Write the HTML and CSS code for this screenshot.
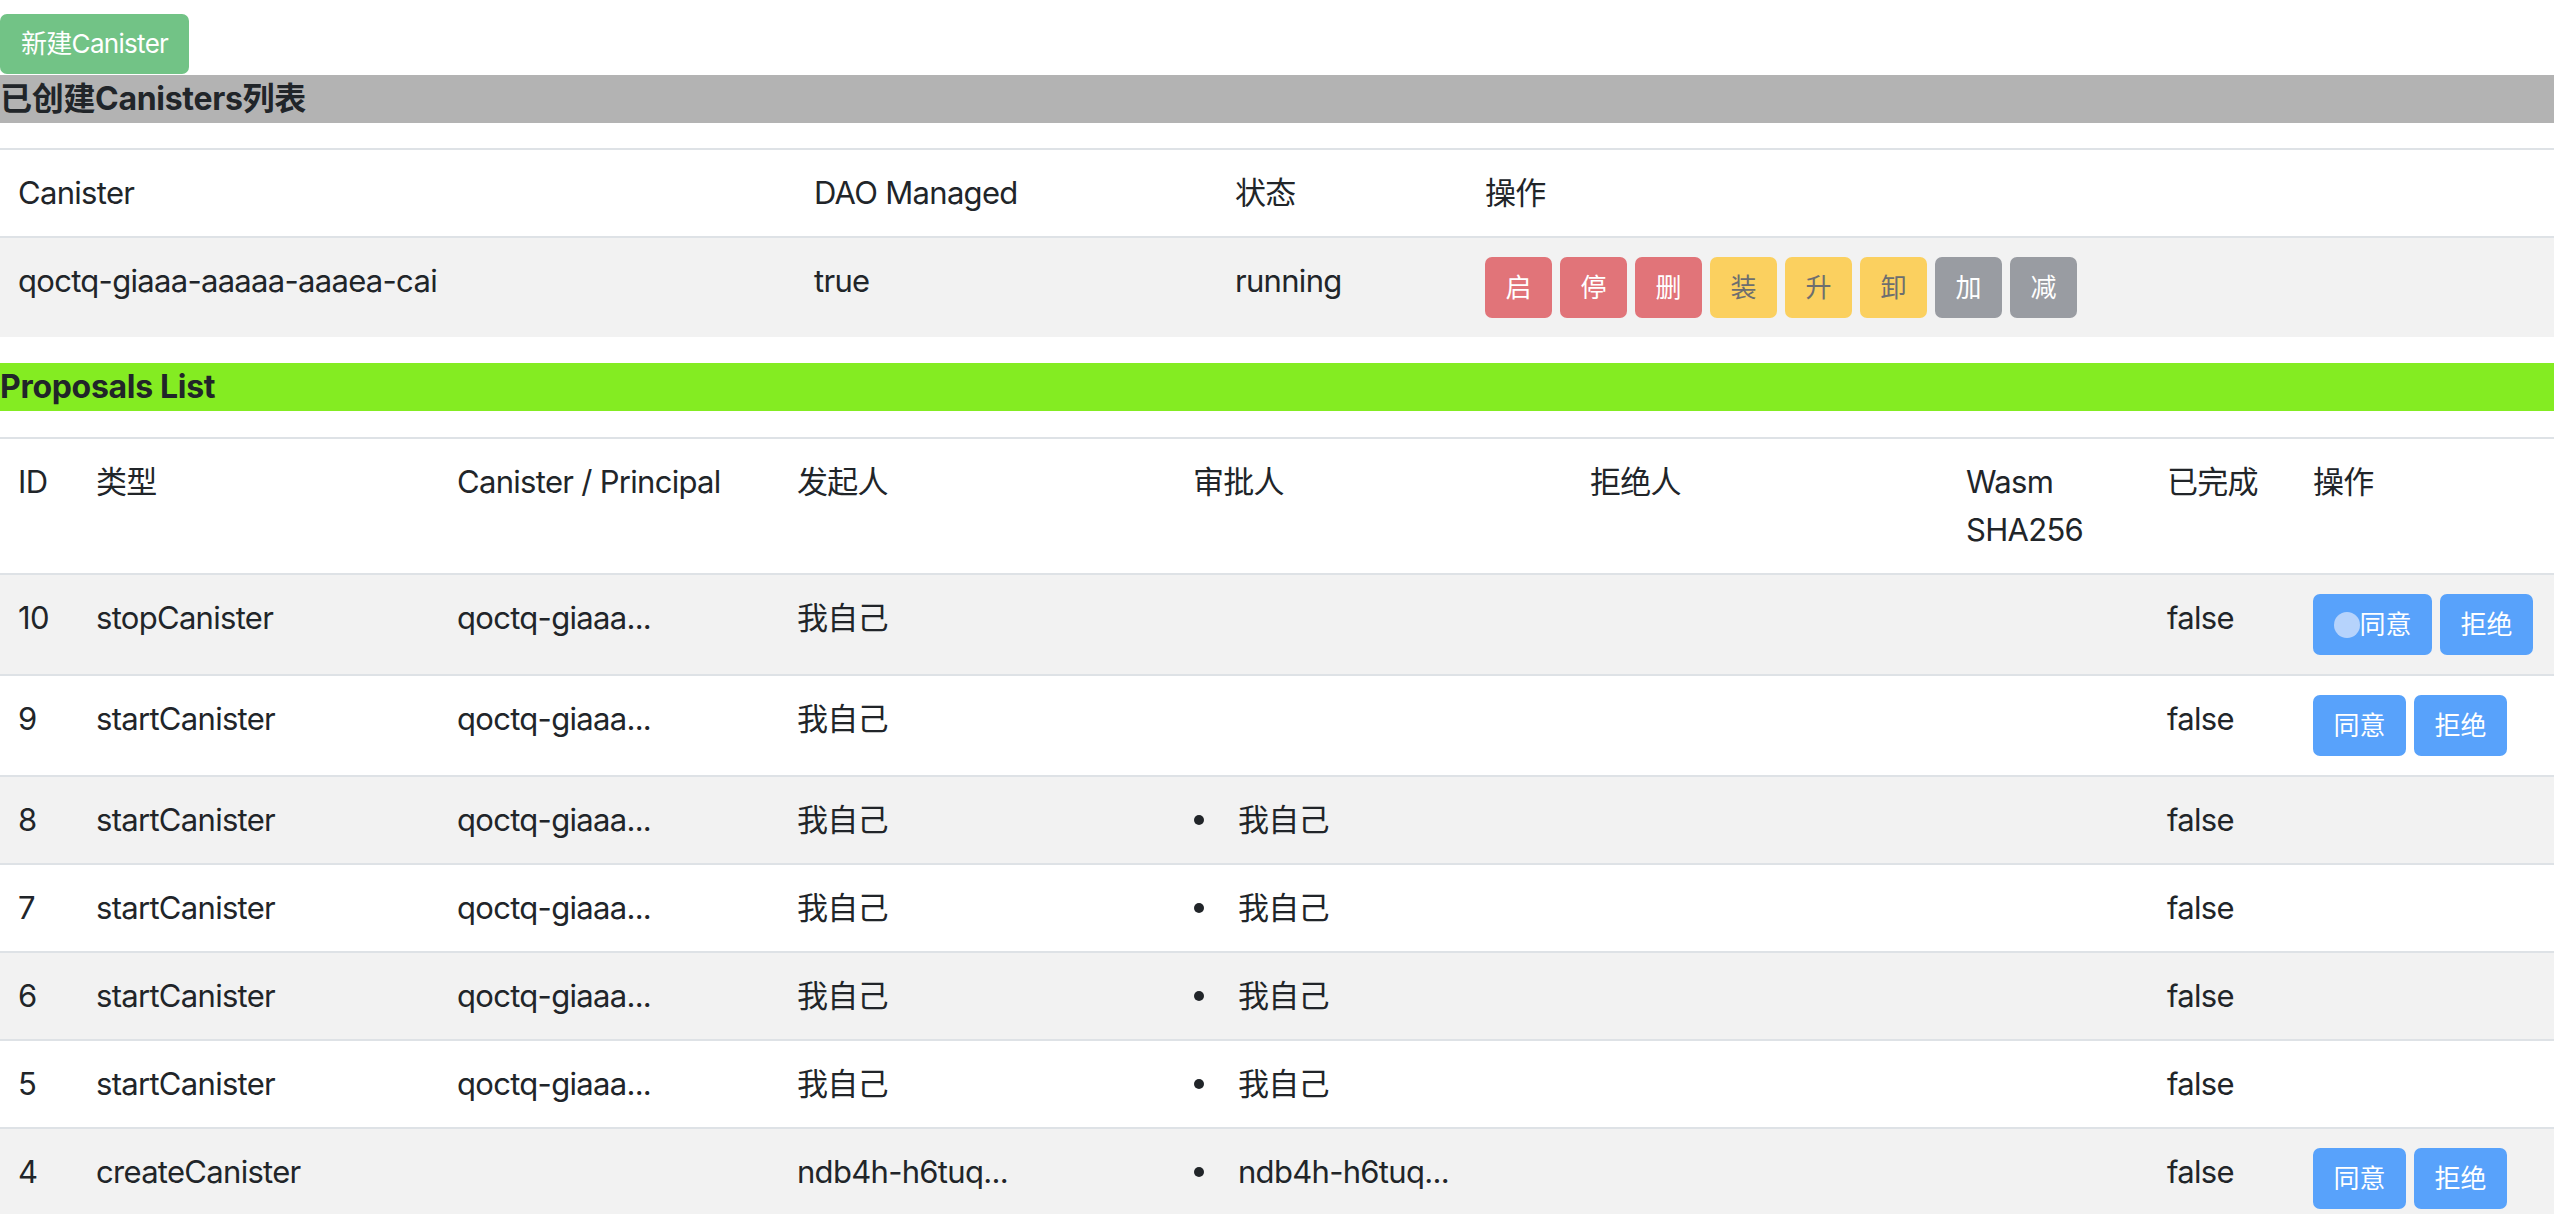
FILE: index.html
```html
<!DOCTYPE html>
<html lang="zh-CN">
<head>
<meta charset="utf-8">
<title>Canisters</title>
<link rel="stylesheet" href="styles.css">
</head>
<body>
<div class="page">
  <div class="toolbar">
    <button class="btn btn-new">新建Canister</button>
  </div>
  <h5 class="bar bar-gray">已创建Canisters列表</h5>
  <table class="tbl">
    <colgroup>
      <col class="c1-can"><col class="c1-dao"><col class="c1-state"><col class="c1-op">
    </colgroup>
    <thead>
      <tr><th>Canister</th><th>DAO Managed</th><th>状态</th><th>操作</th></tr>
    </thead>
    <tbody>
      <tr>
        <td>qoctq-giaaa-aaaaa-aaaea-cai</td>
        <td>true</td>
        <td>running</td>
        <td>
          <div class="btns">
            <button class="btn btn-danger">启</button>
            <button class="btn btn-danger">停</button>
            <button class="btn btn-danger">删</button>
            <button class="btn btn-warning">装</button>
            <button class="btn btn-warning">升</button>
            <button class="btn btn-warning">卸</button>
            <button class="btn btn-secondary">加</button>
            <button class="btn btn-secondary">减</button>
          </div>
        </td>
      </tr>
    </tbody>
  </table>

  <h5 class="bar bar-green">Proposals List</h5>
  <table class="tbl">
    <colgroup>
      <col class="c2-id"><col class="c2-type"><col class="c2-can"><col class="c2-from"><col class="c2-appr"><col class="c2-rej"><col class="c2-wasm"><col class="c2-done"><col class="c2-op">
    </colgroup>
    <thead>
      <tr><th>ID</th><th>类型</th><th>Canister / Principal</th><th>发起人</th><th>审批人</th><th>拒绝人</th><th>Wasm SHA256</th><th>已完成</th><th>操作</th></tr>
    </thead>
    <tbody>
      <tr>
        <td>10</td><td>stopCanister</td><td>qoctq-giaaa...</td><td>我自己</td><td></td><td></td><td></td><td>false</td>
        <td><div class="btns"><button class="btn btn-primary"><span class="spinner"></span>同意</button><button class="btn btn-primary">拒绝</button></div></td>
      </tr>
      <tr>
        <td>9</td><td>startCanister</td><td>qoctq-giaaa...</td><td>我自己</td><td></td><td></td><td></td><td>false</td>
        <td><div class="btns"><button class="btn btn-primary">同意</button><button class="btn btn-primary">拒绝</button></div></td>
      </tr>
      <tr>
        <td>8</td><td>startCanister</td><td>qoctq-giaaa...</td><td>我自己</td><td><ul class="plist"><li>我自己</li></ul></td><td></td><td></td><td>false</td><td></td>
      </tr>
      <tr>
        <td>7</td><td>startCanister</td><td>qoctq-giaaa...</td><td>我自己</td><td><ul class="plist"><li>我自己</li></ul></td><td></td><td></td><td>false</td><td></td>
      </tr>
      <tr>
        <td>6</td><td>startCanister</td><td>qoctq-giaaa...</td><td>我自己</td><td><ul class="plist"><li>我自己</li></ul></td><td></td><td></td><td>false</td><td></td>
      </tr>
      <tr>
        <td>5</td><td>startCanister</td><td>qoctq-giaaa...</td><td>我自己</td><td><ul class="plist"><li>我自己</li></ul></td><td></td><td></td><td>false</td><td></td>
      </tr>
      <tr>
        <td>4</td><td>createCanister</td><td></td><td>ndb4h-h6tuq...</td><td><ul class="plist"><li>ndb4h-h6tuq...</li></ul></td><td></td><td></td><td>false</td>
        <td><div class="btns"><button class="btn btn-primary">同意</button><button class="btn btn-primary">拒绝</button></div></td>
      </tr>
    </tbody>
  </table>
</div>
</body>
</html>
```

FILE: styles.css
```css
* { box-sizing: border-box; }

body {
  margin: 0;
  background: #ffffff;
  color: #212529;
  font-family: "Inter", "Noto Sans CJK SC", sans-serif;
  font-size: 31px;
  line-height: 48px;
}

.page { width: 100%; }

.toolbar {
  display: flex;
  padding-top: 14px;
  padding-bottom: 1px;
}

.btn {
  font-family: "Inter", "Noto Sans CJK SC", sans-serif;
  font-size: 26px;
  line-height: 57px;
  height: 61px;
  padding: 0 18.5px;
  border: 2px solid transparent;
  border-radius: 7px;
  color: #ffffff;
  display: inline-flex;
  align-items: center;
  white-space: nowrap;
  cursor: default;
}

.btn-new {
  height: 60px;
  line-height: 56px;
  padding: 0 19px;
  background: #72c386;
  border-color: #72c386;
  letter-spacing: -0.7px;
}

.btn-danger { background: #e17479; border-color: #e17479; }
.btn-warning { background: #fbd05f; border-color: #fbd05f; color: #6d6e6f; }
.btn-secondary { background: #999ca2; border-color: #999ca2; }
.btn-primary { background: #58a2fb; border-color: #58a2fb; }

.spinner {
  width: 26px;
  height: 26px;
  border-radius: 50%;
  background: #b6d3fc;
  flex: none;
}

.bar {
  margin: 0;
  font-size: 32px;
  font-weight: 700;
  line-height: 48px;
  height: 48px;
  letter-spacing: -0.3px;
}
.bar-gray { background: #b3b3b3; margin-bottom: 25px; }
.bar-green { background: #84ec22; margin-bottom: 26px; }

.tbl {
  width: 100%;
  table-layout: fixed;
  border-collapse: collapse;
  margin-bottom: 26px;
}

.tbl th,
.tbl td {
  padding: 19px 18px;
  border-top: 2px solid #dee2e6;
  text-align: left;
  vertical-align: top;
  font-weight: 400;
  letter-spacing: -0.7px;
}

.tbl tbody tr:nth-child(odd) { background: #f2f2f2; }

.btns {
  display: flex;
  gap: 8px;
}

.c1-can { width: 796px; }
.c1-dao { width: 421px; }
.c1-state { width: 250px; }
.c1-op { width: auto; }

.c2-id { width: 78px; }
.c2-type { width: 361px; }
.c2-can { width: 340px; }
.c2-from { width: 396px; }
.c2-appr { width: 397px; }
.c2-rej { width: 376px; }
.c2-wasm { width: 201px; }
.c2-done { width: 146px; }
.c2-op { width: auto; }

.plist {
  list-style: none;
  margin: 0;
  padding: 0;
}
.plist li {
  display: flex;
  align-items: center;
}
.plist li::before {
  content: "";
  width: 10px;
  height: 10px;
  border-radius: 50%;
  background: #212529;
  margin: 0 34px 0 1px;
  flex: none;
}
```
